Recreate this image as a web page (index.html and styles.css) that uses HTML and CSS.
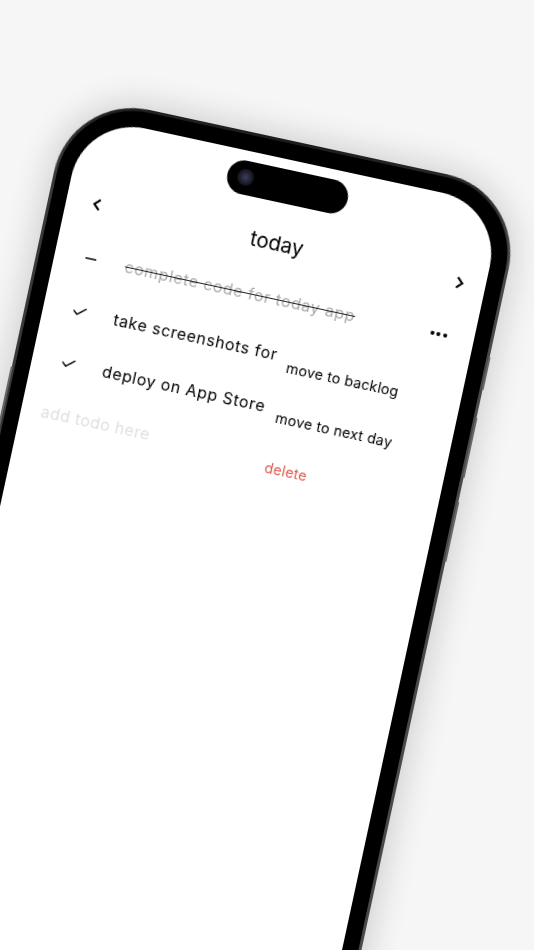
FILE: index.html
```html
<!DOCTYPE html>
<html lang="en">
<head>
<meta charset="utf-8">
<title>today</title>
<link rel="stylesheet" href="styles.css">
</head>
<body>
<main class="stage">
  <div class="phone">
    <span class="side-btn side-left-a"></span>
    <span class="side-btn side-right-a"></span>
    <span class="side-btn side-right-b"></span>
    <span class="side-btn side-right-c"></span>
    <div class="bezel">
      <div class="screen">
        <div class="island"><span class="camera"></span></div>
        <header class="nav">
          <svg class="chev" viewBox="0 0 10 14"><path d="M8 2 3 7l5 5"/></svg>
          <h1 class="title">today</h1>
          <svg class="chev" viewBox="0 0 10 14"><path d="M2 2l5 5-5 5"/></svg>
        </header>
        <ul class="list">
          <li class="row">
            <svg class="mark" viewBox="0 0 18 12"><path d="M3 6h11"/></svg>
            <span class="todo done">complete code for today app</span>
            <span class="dots"><i></i><i></i><i></i></span>
          </li>
          <li class="row">
            <svg class="mark" viewBox="0 0 18 12"><path d="M2.5 6.5 6.5 10 15 3"/></svg>
            <span class="todo">take screenshots for</span>
          </li>
          <li class="row">
            <svg class="mark" viewBox="0 0 18 12"><path d="M2.5 6.5 6.5 10 15 3"/></svg>
            <span class="todo">deploy on App Store</span>
          </li>
          <li class="row add">add todo here</li>
        </ul>
        <nav class="menu">
          <span class="menu-item">move to backlog</span>
          <span class="menu-item">move to next day</span>
          <span class="menu-item danger">delete</span>
        </nav>
      </div>
    </div>
  </div>
</main>
</body>
</html>
```
FILE: styles.css
```css
* { box-sizing: border-box; }
html, body { margin: 0; padding: 0; }
body { background: #f6f6f6; font-family: Inter, "Liberation Sans", sans-serif; }
.stage { position: relative; width: 534px; height: 950px; overflow: hidden; background: #f6f6f6; }
.phone {
  position: absolute; left: 71px; top: 93px; width: 465px; height: 1100px;
  transform: rotate(12.2deg); transform-origin: 0 0;
  border-radius: 80px; padding: 3px;
  background: linear-gradient(90deg, #3a3a3a, #222 8%, #1c1c1c 50%, #2a2a2a 92%, #4a4a4a);
  box-shadow: 0 0 32px 5px rgba(0,0,0,.16);
  filter: blur(.25px);
}
.side-btn { position: absolute; width: 2px; background: #666; }
.side-left-a { left: -1px; top: 280px; height: 70px; }
.side-right-a { right: -1px; top: 170px; height: 33px; }
.side-right-b { right: -1px; top: 232px; height: 61px; }
.side-right-c { right: -1px; top: 318px; height: 61px; }
.bezel { position: relative; height: 100%; padding: 16px 16px 16px 15px; border-radius: 77px; background: #000; }
.screen { position: relative; height: 100%; border-radius: 62px; background: #fff; padding-top: 10px; overflow: hidden; }
.island { position: relative; width: 123px; height: 34px; margin: 0 auto; border-radius: 17px; background: #000; left: -1px; }
.camera { position: absolute; left: 10px; top: 8px; width: 17px; height: 17px; border-radius: 50%; background: radial-gradient(circle, #3d3d5a 0, #1b1b28 55%, #000 100%); }
.nav { display: flex; align-items: center; justify-content: space-between; height: 40px; margin-top: 20px; padding: 0 20px 0 25px; }
.chev { width: 11px; height: 15px; fill: none; stroke: #000; stroke-width: 2; }
.title { margin: 0 3px 0 0; font-size: 20.5px; font-weight: 400; color: #000; }
.list { list-style: none; margin: 8.5px 0 0; padding: 0 0 0 20px; }
.row { display: flex; align-items: center; height: 53px; font-size: 16px; color: #000; }
.mark { width: 18px; height: 12px; margin-left: 8px; margin-right: 25.5px; fill: none; stroke: #000; stroke-width: 1.5; flex: none; }
.todo { padding-top: 2px; letter-spacing: .65px; white-space: nowrap; }
.done { padding-top: 0; color: #aaa; text-decoration: line-through; text-decoration-color: #222; text-decoration-thickness: 1.2px; }
.dots { display: flex; gap: 2.5px; margin-left: 77px; }
.dots i { width: 4px; height: 4px; border-radius: 50%; background: #000; }
.add { color: #e0e0e0; letter-spacing: .45px; }
.menu { position: absolute; left: 250.5px; top: 194.5px; display: flex; flex-direction: column; gap: 33px; font-size: 14.3px; color: #000; }
.menu-item { display: block; height: 18px; line-height: 18px; letter-spacing: .2px; white-space: nowrap; }
.danger { color: #dc5a4e; }
```
